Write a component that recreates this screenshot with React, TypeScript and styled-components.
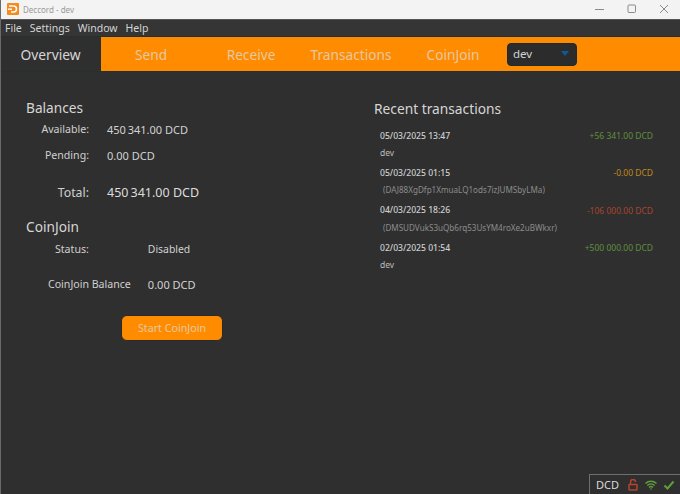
import React from "react";
import styled, { createGlobalStyle } from "styled-components";

const GlobalStyle = createGlobalStyle`
  html, body {
    margin: 0;
    padding: 0;
    background: #2f2f2f;
  }
  * {
    box-sizing: border-box;
  }
`;

const ORANGE = "#ff8c00";

const TABS = [
  { label: "Send", width: 100 },
  { label: "Receive", width: 100 },
  { label: "Transactions", width: 100 },
  { label: "CoinJoin", width: 104 },
];

const TRANSACTIONS = [
  { date: "05/03/2025 13:47", amount: "+56 341.00 DCD", tone: "#5f8f3e", sub: "dev", muted: false },
  { date: "05/03/2025 01:15", amount: "-0.00 DCD", tone: "#c08a1e", sub: "(DAJ88XgDfp1XmuaLQ1ods7izJUMSbyLMa)", muted: true },
  { date: "04/03/2025 18:26", amount: "-106 000.00 DCD", tone: "#a8452f", sub: "(DMSUDVukS3uQb6rq53UsYM4roXe2uBWkxr)", muted: true },
  { date: "02/03/2025 01:54", amount: "+500 000.00 DCD", tone: "#5f8f3e", sub: "dev", muted: false },
];

const App = () => {
  return (
    <Window>
      <GlobalStyle />
      <TitleBar>
        <TitleLeft>
          <AppLogo viewBox="0 0 12 12">
            <rect width="12" height="12" rx="1" fill="#f58a1f" />
            <path d="M2 3h4.5a3 3 0 0 1 0 6H4" fill="none" stroke="#fff" strokeWidth="1.5" />
            <rect x="1" y="5.5" width="4" height="1.4" fill="#fff" />
          </AppLogo>
          <TitleText>Deccord - dev</TitleText>
        </TitleLeft>
        <WindowControls>
          <ControlIcon viewBox="0 0 10 10">
            <path d="M0 5.5h9" />
          </ControlIcon>
          <ControlIcon viewBox="0 0 10 10">
            <rect x="1" y="1" width="7.5" height="7.5" rx="1" />
          </ControlIcon>
          <ControlIcon viewBox="0 0 10 10">
            <path d="M1 1l8 8M9 1l-8 8" />
          </ControlIcon>
        </WindowControls>
      </TitleBar>

      <MenuBar>
        <MenuItem>File</MenuItem>
        <MenuItem>Settings</MenuItem>
        <MenuItem>Window</MenuItem>
        <MenuItem>Help</MenuItem>
      </MenuBar>

      <TabBar>
        <ActiveTab>Overview</ActiveTab>
        <TabStrip>
          {TABS.map((tab) => (
            <Tab key={tab.label} $width={tab.width}>
              {tab.label}
            </Tab>
          ))}
          <WalletSelect>
            <span>dev</span>
            <SelectArrow />
          </WalletSelect>
        </TabStrip>
      </TabBar>

      <Content>
        <LeftColumn>
          <SectionTitle>Balances</SectionTitle>
          <BalanceGrid>
            <BalanceLabel>Available:</BalanceLabel>
            <BalanceValue>450{"\u2009"}341.00 DCD</BalanceValue>
            <BalanceLabel>Pending:</BalanceLabel>
            <BalanceValue>0.00 DCD</BalanceValue>
            <TotalLabel>Total:</TotalLabel>
            <TotalValue>450{"\u2009"}341.00 DCD</TotalValue>
          </BalanceGrid>

          <CoinJoinTitle>CoinJoin</CoinJoinTitle>
          <CoinJoinGrid>
            <StatusLabel>Status:</StatusLabel>
            <StatusValue>Disabled</StatusValue>
            <BalanceLabel>CoinJoin Balance</BalanceLabel>
            <BalanceValue>0.00 DCD</BalanceValue>
          </CoinJoinGrid>
          <StartButton>Start CoinJoin</StartButton>
        </LeftColumn>

        <RightColumn>
          <RecentTitle>Recent transactions</RecentTitle>
          <TxList>
            {TRANSACTIONS.map((tx) => (
              <TxRow key={tx.date}>
                <TxTop>
                  <TxDate>{tx.date}</TxDate>
                  <TxAmount $tone={tx.tone}>{tx.amount}</TxAmount>
                </TxTop>
                <TxSub $muted={tx.muted}>{tx.sub}</TxSub>
              </TxRow>
            ))}
          </TxList>
        </RightColumn>
      </Content>

      <StatusBar>
        <StatusBox>
          <StatusUnit>DCD</StatusUnit>
          <StatusIcon viewBox="0 0 12 12" fill="none" stroke="#b5432f" strokeWidth="1.5">
            <rect x="2" y="5.5" width="8" height="5.5" rx="0.5" />
            <path d="M3.5 5.5V3a2.5 2.5 0 0 1 5 0" />
          </StatusIcon>
          <StatusIcon viewBox="0 0 12 12" fill="none" stroke="#5f9e3a" strokeWidth="1.4">
            <path d="M0.5 4.5a8 8 0 0 1 11 0M2.3 6.5a5.4 5.4 0 0 1 7.4 0M4 8.4a3 3 0 0 1 4 0" />
            <circle cx="6" cy="10" r="0.8" fill="#5f9e3a" stroke="none" />
          </StatusIcon>
          <StatusIcon viewBox="0 0 12 12" fill="none" stroke="#5f9e3a" strokeWidth="2">
            <path d="M1.5 6.5l3 3 6-7" />
          </StatusIcon>
        </StatusBox>
      </StatusBar>
    </Window>
  );
};

const Window = styled.div`
  width: 680px;
  height: 494px;
  display: flex;
  flex-direction: column;
  background: #2f2f2f;
  color: #d2d2d2;
  font-family: "Noto Sans", "Liberation Sans", sans-serif;
  overflow: hidden;
  border-left: 1px solid #6a6a6a;
`;

const TitleBar = styled.div`
  height: 20px;
  flex: none;
  display: flex;
  justify-content: space-between;
  align-items: center;
  background: #f3f3f3;
  border-bottom: 1px solid #555;
  padding: 0 11px 1px 6px;
`;

const TitleLeft = styled.div`
  display: flex;
  align-items: center;
  gap: 4px;
`;

const AppLogo = styled.svg`
  width: 12px;
  height: 12px;
`;

const TitleText = styled.span`
  font-size: 8px;
  color: #9a9a9a;
`;

const WindowControls = styled.div`
  display: flex;
  align-items: center;
  gap: 22px;
`;

const ControlIcon = styled.svg`
  width: 10px;
  height: 10px;
  fill: none;
  stroke: #8a8a8a;
  stroke-width: 1;
`;

const MenuBar = styled.div`
  height: 16px;
  flex: none;
  display: flex;
  align-items: center;
  gap: 8px;
  padding-left: 4px;
  background: #353535;
  font-size: 10.5px;
  color: #d4d4d4;
`;

const MenuItem = styled.span``;

const TabBar = styled.div`
  height: 36px;
  flex: none;
  display: flex;
  border-top: 1px solid #26302f;
  border-bottom: 1px solid #26302f;
`;

const ActiveTab = styled.div`
  width: 100px;
  display: flex;
  align-items: center;
  justify-content: center;
  font-size: 13.8px;
  color: #d6d6d6;
  background: #2f2f2f;
  border-right: 1px solid #26302f;
`;

const TabStrip = styled.div`
  flex: 1;
  display: flex;
  align-items: center;
  background: ${ORANGE};
`;

const Tab = styled.div<{ $width: number }>`
  width: ${(props) => props.$width}px;
  text-align: center;
  font-size: 13.7px;
  color: #e6c7a2;
`;

const WalletSelect = styled.div`
  width: 70px;
  height: 23px;
  margin-left: 2px;
  padding: 0 7px 2px 5px;
  display: flex;
  align-items: center;
  justify-content: space-between;
  background: #2c2c2c;
  border: 1px solid #1f2a2a;
  border-radius: 4px;
  font-size: 11.5px;
  color: #d2d2d2;
`;

const SelectArrow = styled.i`
  width: 0;
  height: 0;
  border-left: 4px solid transparent;
  border-right: 4px solid transparent;
  border-top: 5px solid #0f5a94;
`;

const Content = styled.div`
  flex: 1;
  display: flex;
  min-height: 0;
`;

const LeftColumn = styled.div`
  width: 373px;
  padding: 26px 0 0 25px;
  display: flex;
  flex-direction: column;
  align-items: flex-start;
`;

const SectionTitle = styled.h2`
  margin: 0;
  font-size: 13.7px;
  line-height: 20px;
  font-weight: 400;
  color: #d6d6d6;
`;

const CoinJoinTitle = styled(SectionTitle)`
  margin-top: 1px;
`;

const BalanceGrid = styled.div`
  display: grid;
  grid-template-columns: 63px auto;
  grid-template-rows: 26px 26px 48px;
  column-gap: 18px;
  margin-top: -2px;
  align-items: center;
`;

const CoinJoinGrid = styled.div`
  display: grid;
  grid-template-columns: auto auto;
  grid-template-rows: 24px 46px;
  column-gap: 17px;
  margin: 0 0 0 22px;
  align-items: center;
`;

const BalanceLabel = styled.div`
  font-size: 10.6px;
  text-align: right;
  color: #cfcfcf;
  white-space: nowrap;
`;

const StatusLabel = styled(BalanceLabel)`
  padding-right: 42px;
`;

const BalanceValue = styled.div`
  font-size: 11px;
  color: #d2d2d2;
  white-space: nowrap;
`;

const StatusValue = styled(BalanceValue)`
  font-size: 10.4px;
`;

const TotalLabel = styled(BalanceLabel)`
  font-size: 12.3px;
`;

const TotalValue = styled(BalanceValue)`
  font-size: 12.5px;
  color: #dcdcdc;
`;

const StartButton = styled.button`
  width: 102px;
  height: 26px;
  margin: 8px 0 0 95px;
  padding: 0;
  background: ${ORANGE};
  border: 1px solid #2a2a2a;
  border-radius: 6px;
  font-family: inherit;
  font-size: 10.7px;
  color: #e6c7a2;
`;

const RightColumn = styled.div`
  flex: 1;
  padding: 27px 27px 0 0;
  display: flex;
  flex-direction: column;
`;

const RecentTitle = styled.h2`
  margin: 0;
  font-size: 13.75px;
  line-height: 20px;
  font-weight: 400;
  color: #d6d6d6;
`;

const TxList = styled.div`
  margin-top: 8px;
  padding-left: 6px;
  display: flex;
  flex-direction: column;
`;

const TxRow = styled.div`
  height: 37.4px;
  display: flex;
  flex-direction: column;
`;

const TxTop = styled.div`
  height: 17px;
  display: flex;
  justify-content: space-between;
  align-items: center;
`;

const TxDate = styled.span`
  font-size: 8.6px;
  font-weight: 500;
  color: #cfcfcf;
`;

const TxAmount = styled.span<{ $tone: string }>`
  font-size: 8.5px;
  color: ${(props) => props.$tone};
`;

const TxSub = styled.div<{ $muted: boolean }>`
  height: 17px;
  line-height: 17px;
  font-size: ${(props) => (props.$muted ? "8.1px" : "8.5px")};
  padding-left: ${(props) => (props.$muted ? "3px" : "0")};
  color: ${(props) => (props.$muted ? "#8c8c8c" : "#bdbdbd")};
`;

const StatusBar = styled.div`
  height: 20px;
  flex: none;
  display: flex;
  justify-content: flex-end;
`;

const StatusBox = styled.div`
  width: 91px;
  display: flex;
  align-items: center;
  gap: 6px;
  padding-left: 6px;
  border: 1px solid #6e6e6e;
  border-right: none;
  border-bottom: none;
`;

const StatusUnit = styled.span`
  font-size: 11px;
  color: #d8d8d8;
  margin-right: 2px;
`;

const StatusIcon = styled.svg`
  width: 12px;
  height: 12px;
`;

export default App;
